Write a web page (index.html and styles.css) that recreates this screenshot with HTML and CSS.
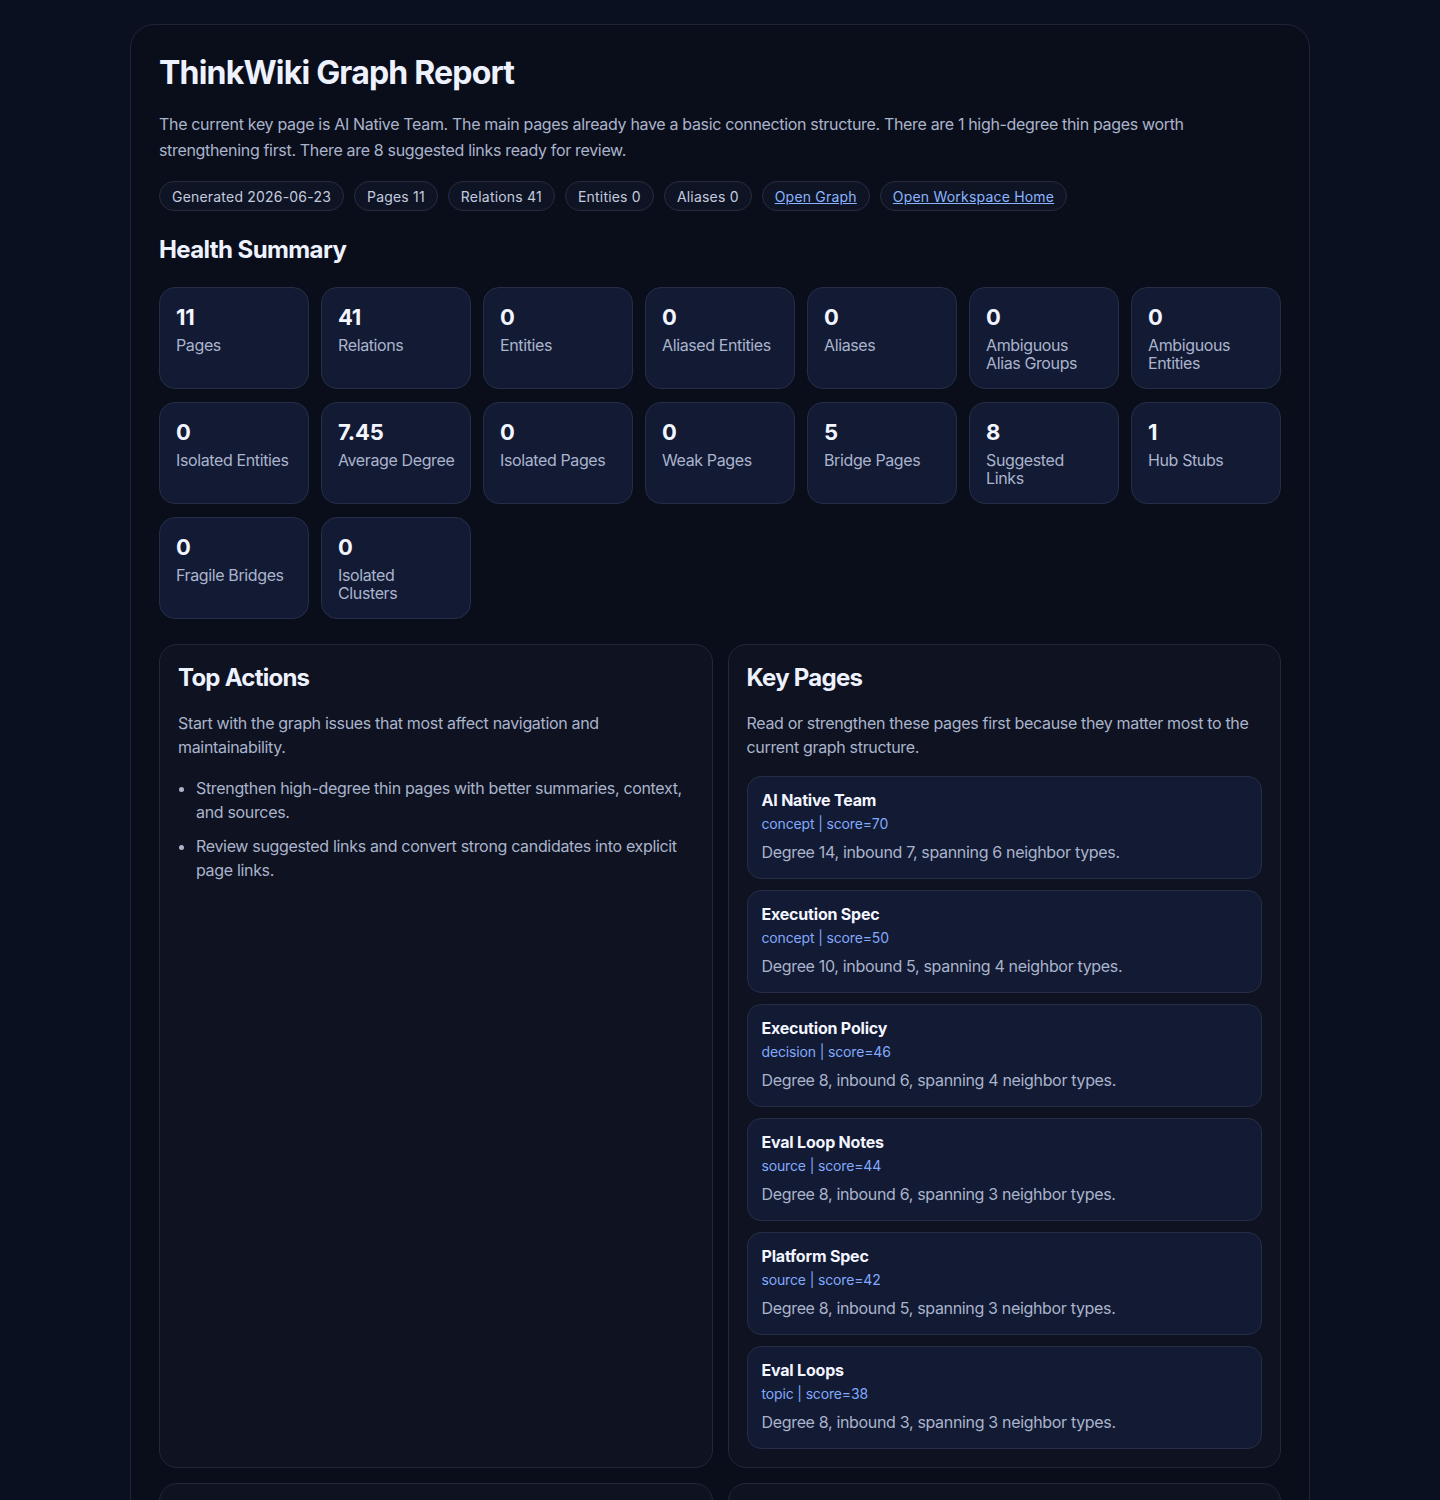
FILE: index.html
```html
<!DOCTYPE html>
<html lang="en">
<head>
    <meta charset="UTF-8">
    <meta name="viewport" content="width=device-width, initial-scale=1.0">
    <title>ThinkWiki Graph Report</title>
    <link rel="stylesheet" href="styles.css">
</head>
<body>
    <main class="report">
        <h1>ThinkWiki Graph Report</h1>
        <p class="lead">The current key page is AI Native Team. The main pages already have a basic connection structure. There are 1 high-degree thin pages worth strengthening first. There are 8 suggested links ready for review.</p>
        <div class="chips">
            <span class="chip">Generated 2026-06-23</span>
            <span class="chip">Pages 11</span>
            <span class="chip">Relations 41</span>
            <span class="chip">Entities 0</span>
            <span class="chip">Aliases 0</span>
            <span class="chip"><a href="#graph">Open Graph</a></span>
            <span class="chip"><a href="#home">Open Workspace Home</a></span>
        </div>

        <h2 class="section-title">Health Summary</h2>
        <div class="stats">
            <div class="stat"><div class="stat-value">11</div><div class="stat-label">Pages</div></div>
            <div class="stat"><div class="stat-value">41</div><div class="stat-label">Relations</div></div>
            <div class="stat"><div class="stat-value">0</div><div class="stat-label">Entities</div></div>
            <div class="stat"><div class="stat-value">0</div><div class="stat-label">Aliased Entities</div></div>
            <div class="stat"><div class="stat-value">0</div><div class="stat-label">Aliases</div></div>
            <div class="stat"><div class="stat-value">0</div><div class="stat-label">Ambiguous Alias Groups</div></div>
            <div class="stat"><div class="stat-value">0</div><div class="stat-label">Ambiguous Entities</div></div>
            <div class="stat"><div class="stat-value">0</div><div class="stat-label">Isolated Entities</div></div>
            <div class="stat"><div class="stat-value">7.45</div><div class="stat-label">Average Degree</div></div>
            <div class="stat"><div class="stat-value">0</div><div class="stat-label">Isolated Pages</div></div>
            <div class="stat"><div class="stat-value">0</div><div class="stat-label">Weak Pages</div></div>
            <div class="stat"><div class="stat-value">5</div><div class="stat-label">Bridge Pages</div></div>
            <div class="stat"><div class="stat-value">8</div><div class="stat-label">Suggested Links</div></div>
            <div class="stat"><div class="stat-value">1</div><div class="stat-label">Hub Stubs</div></div>
            <div class="stat"><div class="stat-value">0</div><div class="stat-label">Fragile Bridges</div></div>
            <div class="stat"><div class="stat-value">0</div><div class="stat-label">Isolated Clusters</div></div>
        </div>

        <div class="panels">
            <section class="panel">
                <h2>Top Actions</h2>
                <p>Start with the graph issues that most affect navigation and maintainability.</p>
                <ul class="actions">
                    <li>Strengthen high-degree thin pages with better summaries, context, and sources.</li>
                    <li>Review suggested links and convert strong candidates into explicit page links.</li>
                </ul>
            </section>

            <section class="panel">
                <h2>Key Pages</h2>
                <p>Read or strengthen these pages first because they matter most to the current graph structure.</p>
                <div class="items">
                    <div class="item">
                        <div class="item-title">AI Native Team</div>
                        <div class="item-meta">concept | score=70</div>
                        <div class="item-text">Degree 14, inbound 7, spanning 6 neighbor types.</div>
                    </div>
                    <div class="item">
                        <div class="item-title">Execution Spec</div>
                        <div class="item-meta">concept | score=50</div>
                        <div class="item-text">Degree 10, inbound 5, spanning 4 neighbor types.</div>
                    </div>
                    <div class="item">
                        <div class="item-title">Execution Policy</div>
                        <div class="item-meta">decision | score=46</div>
                        <div class="item-text">Degree 8, inbound 6, spanning 4 neighbor types.</div>
                    </div>
                    <div class="item">
                        <div class="item-title">Eval Loop Notes</div>
                        <div class="item-meta">source | score=44</div>
                        <div class="item-text">Degree 8, inbound 6, spanning 3 neighbor types.</div>
                    </div>
                    <div class="item">
                        <div class="item-title">Platform Spec</div>
                        <div class="item-meta">source | score=42</div>
                        <div class="item-text">Degree 8, inbound 5, spanning 3 neighbor types.</div>
                    </div>
                    <div class="item">
                        <div class="item-title">Eval Loops</div>
                        <div class="item-meta">topic | score=38</div>
                        <div class="item-text">Degree 8, inbound 3, spanning 3 neighbor types.</div>
                    </div>
                </div>
            </section>

            <section class="panel">
                <h2>Bridge Pages</h2>
                <p>These pages connect otherwise separate parts of the graph.</p>
            </section>

            <section class="panel">
                <h2>Suggested Links</h2>
                <p>Candidate links between pages that share context but are not yet connected.</p>
            </section>
        </div>
    </main>
</body>
</html>
```

FILE: styles.css
```css
body {
    font-family: 'Inter', 'Noto Sans', sans-serif;
    margin: 0;
    padding: 24px 0;
    background-color: #0b1020;
    color: #aab4cb;
    letter-spacing: -0.33px;
}
a {
    color: #8ab4ff;
}
.report {
    width: 1122px;
    margin: 0 auto;
    padding: 28px;
    background-color: #0a0e1b;
    border: 1px solid #1f2536;
    border-radius: 24px;
}
h1 {
    margin: 0;
    font-size: 32px;
    line-height: 40px;
    font-weight: 700;
    letter-spacing: -0.8px;
    color: #eef2ff;
}
.lead {
    margin: 18px 0 0;
    font-size: 16px;
    line-height: 26px;
}
.chips {
    display: flex;
    flex-wrap: wrap;
    gap: 10px;
    margin-top: 18px;
}
.chip {
    display: inline-flex;
    align-items: center;
    height: 28px;
    padding: 0 12px;
    font-size: 14px;
    letter-spacing: 0.2px;
    color: #c3cbdf;
    background-color: #0f1425;
    border: 1px solid #262c3f;
    border-radius: 999px;
}
.section-title {
    margin: 23px 0 21px;
    font-size: 24px;
    line-height: 32px;
    color: #eef2ff;
    letter-spacing: -0.6px;
}
.stats {
    display: grid;
    grid-template-columns: repeat(7, 1fr);
    gap: 13px 12px;
}
.stat {
    padding: 16px 14px 16px 16px;
    background-color: #121a34;
    border: 1px solid #262e47;
    border-radius: 16px;
}
.stat-value {
    font-size: 22px;
    line-height: 26px;
    font-weight: 700;
    letter-spacing: -0.2px;
    color: #f3f5ff;
    margin-bottom: 6px;
}
.stat-label {
    font-size: 16px;
    line-height: 18px;
    letter-spacing: -0.38px;
    color: #aab4cc;
}
.panels {
    display: grid;
    grid-template-columns: 1fr 1fr;
    gap: 15px;
    margin-top: 25px;
}
.panel {
    padding: 18px;
    background-color: #0e1221;
    border: 1px solid #222839;
    border-radius: 18px;
}
.panel h2 {
    margin: 0;
    font-size: 24px;
    line-height: 30px;
    color: #eef2ff;
    letter-spacing: -0.75px;
}
.panel p {
    margin: 18px 0 0;
    font-size: 16px;
    line-height: 24px;
}
.actions {
    margin: 17px 0 0;
    padding-left: 18px;
}
.actions li {
    font-size: 16px;
    line-height: 24px;
    margin-bottom: 10px;
}
.items {
    display: flex;
    flex-direction: column;
    gap: 11px;
    margin-top: 17px;
}
.item {
    padding: 14px;
    background-color: #121a34;
    border: 1px solid #262e47;
    border-radius: 14px;
}
.item-title {
    font-size: 16px;
    line-height: 18px;
    font-weight: 700;
    letter-spacing: -0.2px;
    color: #f3f5ff;
}
.item-meta {
    margin-top: 5px;
    font-size: 14px;
    line-height: 20px;
    letter-spacing: -0.15px;
    color: #82a9fb;
}
.item-text {
    margin-top: 6px;
    font-size: 16px;
    line-height: 24px;
}
```
